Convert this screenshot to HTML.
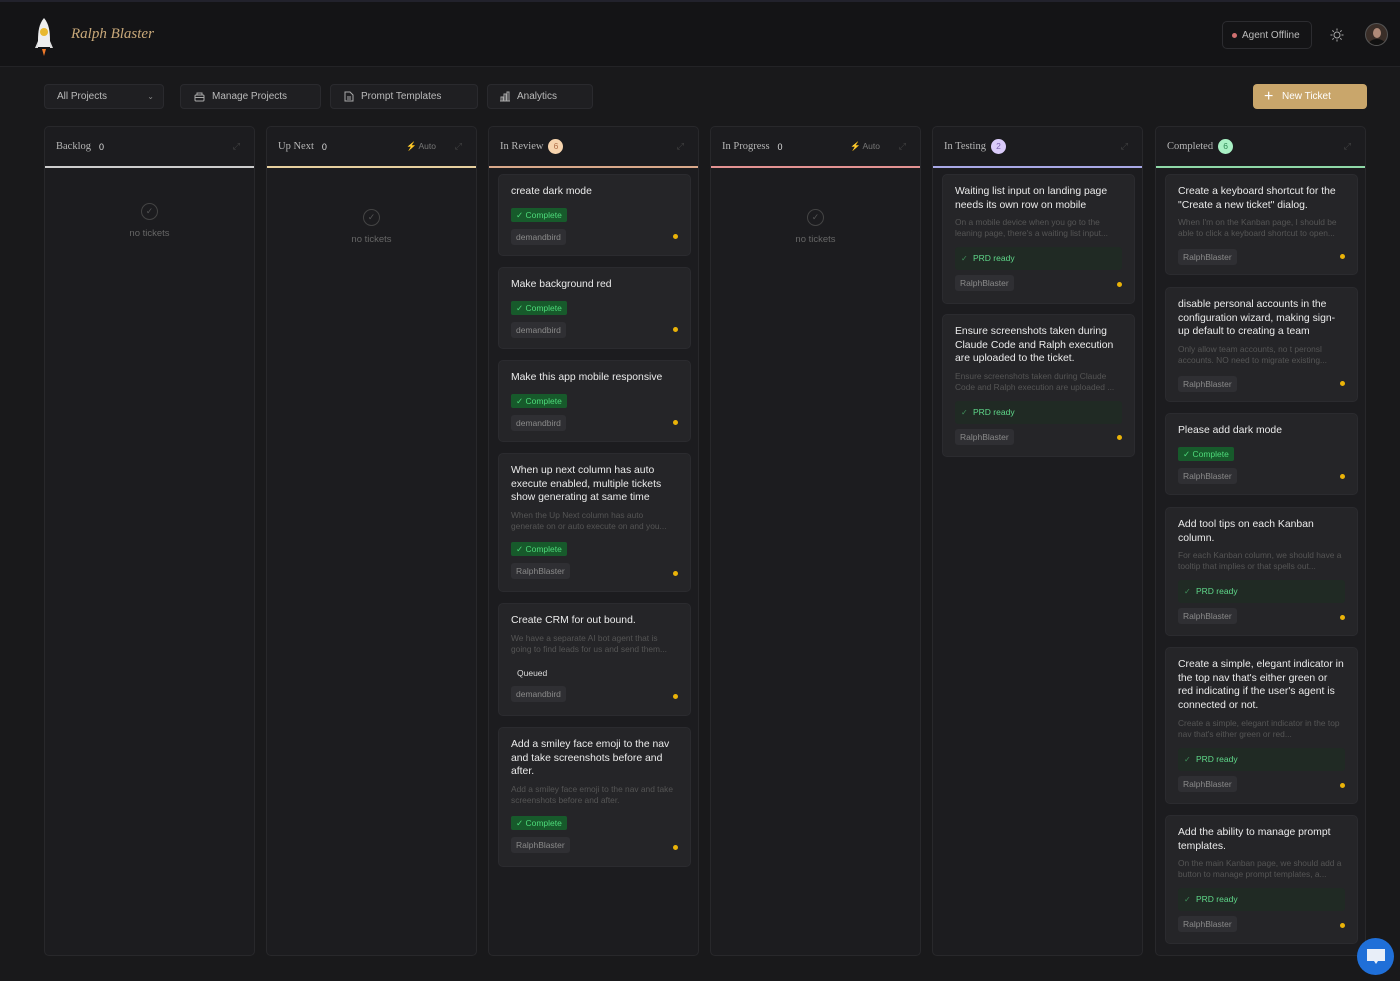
<!DOCTYPE html>
<html><head><meta charset="utf-8"><style>
*{box-sizing:border-box;margin:0;padding:0}
body{width:1400px;height:981px;background:#19191b;font-family:"Liberation Sans",sans-serif;position:relative;overflow:hidden;color:#ddd}
.hdr{position:absolute;left:0;top:0;width:1400px;height:67px;background:#141416;border-bottom:1px solid #232326;border-top:2px solid #22222c}
.brand{position:absolute;left:71px;top:24px;font-family:"Liberation Serif",serif;font-style:italic;font-size:15px;color:#c9a97a}
.agent{position:absolute;left:1222px;top:19px;width:90px;height:28px;border:1px solid #2c2c30;border-radius:5px;font-size:10px;color:#bbb;padding:8px 0 0 19px}
.agent:before{content:"";position:absolute;left:9px;top:11px;width:5px;height:5px;border-radius:50%;background:#d07070}
.btn{position:absolute;top:84px;height:25px;background:#1f1f22;border:1px solid #2a2a2e;border-radius:4px;font-size:10px;color:#bbb;padding:0 0 0 12px;line-height:23px}
.btn svg{position:absolute;top:6px}
.new{position:absolute;left:1253px;top:84px;width:114px;height:25px;background:#c9a66b;border-radius:4px;color:#fff;font-size:10px;padding-left:29px;line-height:25px}
.col{position:absolute;top:126px;width:211px;height:830px;background:#1c1c1f;border:1px solid #28282b;border-radius:5px}
.ch{height:41px;border-bottom:2px solid #ccc;position:relative;font-family:"Liberation Serif",serif;font-size:10.5px;color:#b5b5b5;padding:0 0 0 11px;display:flex;align-items:center}
.ch .n{font-family:"Liberation Sans",sans-serif;font-size:9px;color:#ddd;margin-left:8px}
.ch .b{display:inline-block;width:15px;height:15px;border-radius:50%;font-family:"Liberation Sans",sans-serif;font-size:8.5px;text-align:center;line-height:15px;margin-left:5px}
.ch .ex{position:absolute;right:14px;top:14px;font-size:9px;color:#444}
.ch .au{position:absolute;right:40px;top:14px;font-family:"Liberation Sans",sans-serif;font-size:8.5px;color:#777}
.ch .au i{color:#e8b84a;font-style:normal}
.empty{position:absolute;left:0;width:100%;text-align:center;font-size:9.5px;color:#666}
.empty .c{width:17px;height:17px;border:1.5px solid #444;border-radius:50%;margin:0 auto 8px;font-size:9px;line-height:14px;color:#555}
.card{position:absolute;width:193px;background:#252528;border:1px solid #2b2b2f;border-radius:5px;padding:10px 12px 0 12px}
.t{font-size:10.4px;line-height:13.7px;color:#ececec}
.d{font-size:8.4px;line-height:11px;color:#555;margin-top:5px}
.bd{display:inline-block;height:14px;background:#175a2b;color:#4ddb7a;font-size:8.5px;line-height:14px;padding:0 5px;border-radius:2px;margin-top:9px}
.d+.bd{margin-top:10px}
.tg{display:block;width:fit-content;height:16px;background:#2f2f33;color:#8a8a8a;font-size:8.5px;line-height:16px;padding:0 5px;border-radius:3px;margin-top:6px}
.prd{height:23px;background:#202a24;border-radius:3px;margin-top:8px;font-size:8.5px;line-height:23px;color:#5fd88a;padding-left:18px;position:relative}
.prd:before{content:"✓";position:absolute;left:6px;color:#3f8f5a;font-size:8px}
.prd+.tg{margin-top:5px}
.q{height:20px;font-size:8.5px;line-height:20px;color:#ddd;padding-left:6px;margin-top:8px}
.q+.tg{margin-top:3px}
.dot{position:absolute;right:12px;width:5px;height:5px;border-radius:50%;background:#eab308}
</style></head><body>
<div class="hdr">
<svg style="position:absolute;left:34px;top:15px" width="20" height="40" viewBox="0 0 20 40"><path d="M10 1 C5 7 4 14 4 24 L4 30 L16 30 L16 24 C16 14 15 7 10 1Z" fill="#eee"/><path d="M4 24 L1 31 L4 31Z M16 24 L19 31 L16 31Z" fill="#ddd"/><circle cx="10" cy="15" r="4" fill="#e8b830"/><path d="M8 32 L10 39 L12 32Z" fill="#f07a2a"/></svg>
<div class="brand">Ralph Blaster</div>
<div class="agent">Agent Offline</div>
<svg style="position:absolute;left:1330px;top:26px" width="14" height="14" viewBox="0 0 14 14" stroke="#aaa" fill="none" stroke-width="1"><circle cx="7" cy="7" r="3"/><path d="M7 0.5v2M7 11.5v2M0.5 7h2M11.5 7h2M2.4 2.4l1.4 1.4M10.2 10.2l1.4 1.4M2.4 11.6l1.4-1.4M10.2 3.8l1.4-1.4"/></svg>
<div style="position:absolute;left:1365px;top:21px;width:23px;height:23px;border-radius:50%;background:#3a2e28;border:1px solid #555;overflow:hidden"><div style="position:absolute;left:7px;top:4px;width:8px;height:10px;border-radius:50%;background:#b08a78"></div><div style="position:absolute;left:3px;top:15px;width:16px;height:10px;border-radius:50%;background:#111"></div></div>
</div>

<div class="btn" style="left:44px;width:120px">All Projects<span style="position:absolute;right:9px;top:0;font-size:8px;color:#888">⌄</span></div>
<div class="btn" style="left:180px;width:141px;padding-left:31px"><svg style="left:13px" width="11" height="11" viewBox="0 0 11 11" fill="none" stroke="#aaa"><rect x="1" y="4" width="9" height="6" rx="1"/><path d="M3 4V2h5v2M1 6.5h9"/></svg>Manage Projects</div>
<div class="btn" style="left:330px;width:148px;padding-left:30px"><svg style="left:13px" width="10" height="11" viewBox="0 0 10 11" fill="none" stroke="#aaa"><path d="M1 1h5l3 3v6H1Z M3 6h4M3 8h4"/></svg>Prompt Templates</div>
<div class="btn" style="left:487px;width:106px;padding-left:29px"><svg style="left:11px" width="12" height="11" viewBox="0 0 12 11" fill="none" stroke="#aaa"><path d="M1 10h10M2 10V6h2v4M5 10V3h2v7M8 10V1h2v9"/></svg>Analytics</div>
<div class="new"><span style="position:absolute;left:11px;top:0;font-size:16px;font-weight:300">+</span>New Ticket</div>

<div class="col" style="left:44px"><div class="ch">Backlog<span class="n">0</span><span class="ex">⤢</span></div>
<div class="empty" style="top:76px"><div class="c">✓</div>no tickets</div></div>

<div class="col" style="left:266px"><div class="ch" style="border-color:#e6cf9e">Up Next<span class="n">0</span><span class="au"><i>⚡</i> Auto</span><span class="ex">⤢</span></div>
<div class="empty" style="top:82px"><div class="c">✓</div>no tickets</div></div>

<div class="col" style="left:488px"><div class="ch" style="border-color:#d9a88a">In Review<span class="b" style="background:#f6d4ae;color:#b0704a">6</span><span class="ex">⤢</span></div></div>

<div class="col" style="left:710px"><div class="ch" style="border-color:#e39292">In Progress<span class="n">0</span><span class="au"><i>⚡</i> Auto</span><span class="ex">⤢</span></div>
<div class="empty" style="top:82px"><div class="c">✓</div>no tickets</div></div>

<div class="col" style="left:932px"><div class="ch" style="border-color:#a8a8e6">In Testing<span class="b" style="background:#dacbfa;color:#7a60b0">2</span><span class="ex">⤢</span></div></div>

<div class="col" style="left:1155px"><div class="ch" style="border-color:#8fd8a8">Completed<span class="b" style="background:#a8f0c4;color:#2e8a55">6</span><span class="ex">⤢</span></div></div>

<div class="card" style="left:498px;top:174px;height:82px"><div class="t">create dark mode</div><span class="bd">✓ Complete</span><span class="tg">demandbird</span><div class="dot" style="top:59px"></div></div>
<div class="card" style="left:498px;top:267px;height:82px"><div class="t">Make background red</div><span class="bd">✓ Complete</span><span class="tg">demandbird</span><div class="dot" style="top:59px"></div></div>
<div class="card" style="left:498px;top:360px;height:82px"><div class="t">Make this app mobile responsive</div><span class="bd">✓ Complete</span><span class="tg">demandbird</span><div class="dot" style="top:59px"></div></div>
<div class="card" style="left:498px;top:453px;height:139px"><div class="t">When up next column has auto execute enabled, multiple tickets show generating at same time</div><div class="d">When the Up Next column has auto generate on or auto execute on and you...</div><span class="bd">✓ Complete</span><span class="tg">RalphBlaster</span><div class="dot" style="top:117px"></div></div>
<div class="card" style="left:498px;top:603px;height:113px"><div class="t">Create CRM for out bound.</div><div class="d">We have a separate AI bot agent that is going to find leads for us and send them...</div><div class="q">Queued</div><span class="tg">demandbird</span><div class="dot" style="top:90px"></div></div>
<div class="card" style="left:498px;top:727px;height:140px"><div class="t">Add a smiley face emoji to the nav and take screenshots before and after.</div><div class="d">Add a smiley face emoji to the nav and take screenshots before and after.</div><span class="bd">✓ Complete</span><span class="tg">RalphBlaster</span><div class="dot" style="top:117px"></div></div>

<div class="card" style="left:942px;top:174px;height:130px"><div class="t">Waiting list input on landing page needs its own row on mobile</div><div class="d">On a mobile device when you go to the leaning page, there's a waiting list input...</div><div class="prd">PRD ready</div><span class="tg">RalphBlaster</span><div class="dot" style="top:107px"></div></div>
<div class="card" style="left:942px;top:314px;height:143px"><div class="t">Ensure screenshots taken during Claude Code and Ralph execution are uploaded to the ticket.</div><div class="d">Ensure screenshots taken during Claude Code and Ralph execution are uploaded ...</div><div class="prd">PRD ready</div><span class="tg">RalphBlaster</span><div class="dot" style="top:120px"></div></div>

<div class="card" style="left:1165px;top:174px;height:101px"><div class="t">Create a keyboard shortcut for the "Create a new ticket" dialog.</div><div class="d">When I'm on the Kanban page, I should be able to click a keyboard shortcut to open...</div><span class="tg" style="margin-top:10px">RalphBlaster</span><div class="dot" style="top:79px"></div></div>
<div class="card" style="left:1165px;top:287px;height:115px"><div class="t">disable personal accounts in the configuration wizard, making sign-up default to creating a team</div><div class="d">Only allow team accounts, no t peronsl accounts. NO need to migrate existing...</div><span class="tg" style="margin-top:10px">RalphBlaster</span><div class="dot" style="top:93px"></div></div>
<div class="card" style="left:1165px;top:413px;height:82px"><div class="t">Please add dark mode</div><span class="bd">✓ Complete</span><span class="tg">RalphBlaster</span><div class="dot" style="top:60px"></div></div>
<div class="card" style="left:1165px;top:507px;height:129px"><div class="t">Add tool tips on each Kanban column.</div><div class="d">For each Kanban column, we should have a tooltip that implies or that spells out...</div><div class="prd">PRD ready</div><span class="tg">RalphBlaster</span><div class="dot" style="top:107px"></div></div>
<div class="card" style="left:1165px;top:647px;height:157px"><div class="t">Create a simple, elegant indicator in the top nav that's either green or red indicating if the user's agent is connected or not.</div><div class="d">Create a simple, elegant indicator in the top nav that's either green or red...</div><div class="prd">PRD ready</div><span class="tg">RalphBlaster</span><div class="dot" style="top:135px"></div></div>
<div class="card" style="left:1165px;top:815px;height:129px"><div class="t">Add the ability to manage prompt templates.</div><div class="d">On the main Kanban page, we should add a button to manage prompt templates, a...</div><div class="prd">PRD ready</div><span class="tg">RalphBlaster</span><div class="dot" style="top:107px"></div></div>

<div style="position:absolute;left:1357px;top:938px;width:37px;height:37px;border-radius:50%;background:#1f6fd8"><svg style="position:absolute;left:9px;top:10px" width="20" height="18" viewBox="0 0 20 18"><path d="M1 1h18v12H12l-2 3-2-3H1Z" fill="#e8eef8"/></svg></div>
</body></html>
